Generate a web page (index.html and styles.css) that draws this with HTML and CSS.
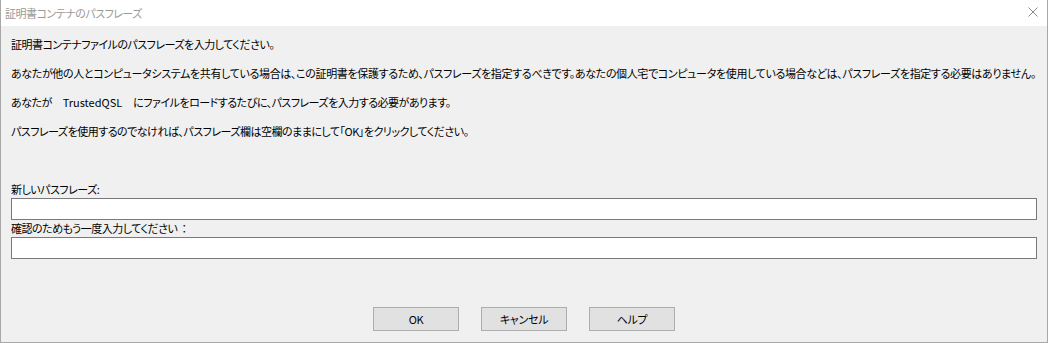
FILE: index.html
```html
<!DOCTYPE html>
<html lang="ja">
<head>
    <meta charset="UTF-8">
    <title>証明書コンテナのパスフレーズ</title>
    <link rel="stylesheet" href="styles.css">
</head>
<body>
    <div class="window">
        <div class="titlebar">
            <span class="title">証明書コンテナのパスフレーズ</span>
            <span class="close">
                <svg width="10" height="10" viewBox="0 0 10 10">
                    <path d="M0.5 0.5 L9.5 9.5 M9.5 0.5 L0.5 9.5" stroke="#8a8a8a" stroke-width="1" fill="none"/>
                </svg>
            </span>
        </div>
        <div class="content">
            <p class="msg">証明書コンテナファイルのパスフレーズを入力してください。</p>
            <p class="msg msg-wide">あなたが他の人とコンピュータシステムを共有している場合は、この証明書を保護するため、パスフレーズを指定するべきです。あなたの個人宅でコンピュータを使用している場合などは、パスフレーズを指定する必要はありません。</p>
            <p class="msg">あなたが<span class="app">TrustedQSL</span>にファイルをロードするたびに、パスフレーズを入力する必要があります。</p>
            <p class="msg">パスフレーズを使用するのでなければ、パスフレーズ欄は空欄のままにして「OK」をクリックしてください。</p>

            <div class="fields">
                <label class="field-label">新しいパスフレーズ:</label>
                <input class="field-input" type="password">
                <label class="field-label">確認のためもう一度入力してください<span class="colon">：</span></label>
                <input class="field-input" type="password">
            </div>

            <div class="buttons">
                <button class="btn">OK</button>
                <button class="btn">キャンセル</button>
                <button class="btn">ヘルプ</button>
            </div>
        </div>
    </div>
</body>
</html>
```

FILE: styles.css
```css
html, body {
    margin: 0;
    padding: 0;
}
body {
    font-family: "Noto Sans CJK JP", "Noto Sans", sans-serif;
    font-size: 11px;
    font-feature-settings: "palt";
    letter-spacing: -0.5px;
    color: #000;
    background-color: #f0f0f0;
}
.window {
    width: 1048px;
    height: 343px;
    box-sizing: border-box;
    display: flex;
    flex-direction: column;
    border-left: 1px solid #a8a8a8;
    border-right: 1px solid #a8a8a8;
    border-bottom: 1px solid #a8a8a8;
}
.titlebar {
    height: 26px;
    flex-shrink: 0;
    display: flex;
    align-items: center;
    justify-content: space-between;
    background-color: #fff;
    padding-left: 4px;
    padding-right: 9px;
}
.title {
    color: #9a9a9a;
    font-size: 11px;
    line-height: 26px;
    padding-bottom: 1px;
}
.close {
    display: flex;
    width: 10px;
    height: 10px;
    margin-bottom: 2px;
}
.content {
    flex: 1;
    background-color: #f0f0f0;
    padding: 4px 10px 0 10px;
    display: flex;
    flex-direction: column;
}
.msg {
    margin: 0;
    line-height: 29px;
    white-space: nowrap;
}
/* long line: the original font keeps 、。 full width */
.msg-wide {
    letter-spacing: -0.35px;
}
.app {
    margin: 0 11px;
    letter-spacing: 0;
}
.fields {
    display: flex;
    flex-direction: column;
    margin-top: 35px;
}
.field-label {
    line-height: 17px;
}
.colon {
    margin-left: 4px;
}
.field-input {
    height: 22px;
    box-sizing: border-box;
    border: 1px solid #7a7a7a;
    background-color: #fff;
    margin: 0;
    padding: 0 3px;
    outline: none;
}
.buttons {
    display: flex;
    justify-content: center;
    gap: 22px;
    margin-top: 48px;
}
.btn {
    width: 86px;
    height: 24px;
    box-sizing: border-box;
    background-color: #e1e1e1;
    border: 1px solid #adadad;
    border-radius: 0;
    font-family: inherit;
    font-size: 11px;
    font-feature-settings: "palt";
    letter-spacing: -0.3px;
    color: #000;
    padding: 0;
}
```
